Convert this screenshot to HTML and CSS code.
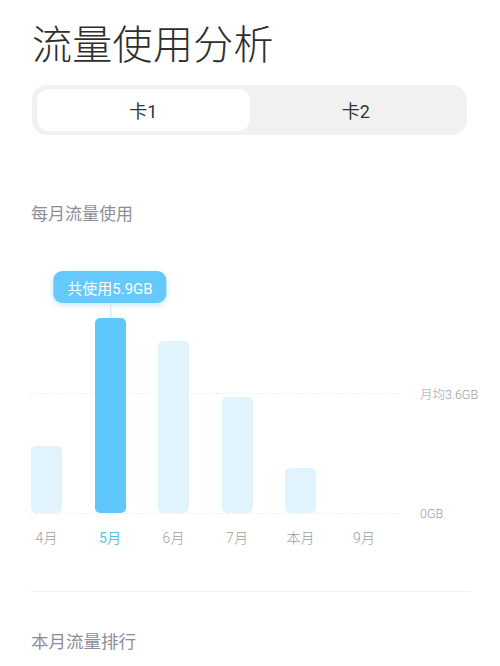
FILE: index.html
```html
<!DOCTYPE html>
<html lang="zh">
<head>
<meta charset="utf-8">
<title>流量使用分析</title>
<link rel="stylesheet" href="styles.css">
</head>
<body>
<div class="page">
  <h1 class="title">流量使用分析</h1>
  <div class="seg">
    <div class="seg-item active">卡1</div>
    <div class="seg-item">卡2</div>
  </div>
  <h2 class="section">每月流量使用</h2>
  <div class="plot">
    <div class="grid" style="bottom:120px"><span class="grid-line"></span><span class="grid-label">月均3.6GB</span></div>
    <div class="grid" style="bottom:0"><span class="grid-line"></span><span class="grid-label">0GB</span></div>
    <div class="bars">
      <div class="col"><div class="bar" style="height:67px"></div></div>
      <div class="col"><div class="tip">共使用5.9GB</div><div class="bar on" style="height:195px"></div></div>
      <div class="col"><div class="bar" style="height:172px"></div></div>
      <div class="col"><div class="bar" style="height:116px"></div></div>
      <div class="col"><div class="bar" style="height:45px"></div></div>
      <div class="col"></div>
    </div>
  </div>
  <div class="months">
    <span class="m">4月</span>
    <span class="m on">5月</span>
    <span class="m">6月</span>
    <span class="m">7月</span>
    <span class="m">本月</span>
    <span class="m">9月</span>
  </div>
  <div class="divider"></div>
  <h2 class="section second">本月流量排行</h2>
</div>
</body>
</html>
```
FILE: styles.css
```css
* { box-sizing: border-box; }
html, body {
  margin: 0;
  padding: 0;
  background: #ffffff;
  font-family: Roboto, "Noto Sans CJK SC", "Noto Sans", sans-serif;
}
.page {
  padding: 0 30px;
  width: 500px;
  height: 666px;
  overflow: hidden;
}
.title {
  margin: 22px 0 0 2px;
  font-size: 40px;
  line-height: 48px;
  font-weight: 300;
  color: #2e2e2e;
  letter-spacing: 0.3px;
}
.seg {
  margin: 15px 3px 0 2px;
  height: 50px;
  padding: 4px 5px;
  background: #f1f1f1;
  border-radius: 15px;
  display: flex;
}
.seg-item {
  flex: 1;
  display: flex;
  align-items: center;
  justify-content: center;
  font-size: 18px;
  color: #333;
  border-radius: 12px;
}
.seg-item.active {
  background: #ffffff;
}
.section {
  margin: 68px 0 0 1px;
  font-size: 17px;
  line-height: 22px;
  font-weight: 400;
  color: #8d8d9a;
}
.section.second {
  margin-top: 39px;
  font-size: 17.5px;
}
.plot {
  position: relative;
  margin-top: 35px;
  height: 253px;
}
.grid {
  position: absolute;
  left: 0;
  display: flex;
  align-items: center;
  height: 0;
}
.grid-line {
  width: 370px;
  border-top: 1px dashed #f0f0f0;
}
.grid-label {
  margin-left: 20px;
  font-size: 12.5px;
  font-weight: 300;
  color: #9c9c9c;
  white-space: nowrap;
}
.bars {
  position: relative;
  height: 100%;
  display: flex;
  align-items: flex-end;
  gap: 32.5px;
  padding-left: 1px;
}
.col {
  position: relative;
  width: 31px;
  display: flex;
  align-items: flex-end;
}
.bar {
  width: 31px;
  background: #e1f3fd;
  border-radius: 5px;
}
.bar.on {
  background: #5fc7fc;
}
.tip {
  position: absolute;
  left: 50%;
  bottom: 210px;
  transform: translateX(-50%);
  height: 32px;
  padding: 0 14px;
  display: flex;
  align-items: center;
  white-space: nowrap;
  font-size: 15px;
  color: #ffffff;
  background: #66c9fb;
  border-radius: 9px;
  box-shadow: 0 2px 6px rgba(90, 180, 235, 0.35);
}
.tip::after {
  content: "";
  position: absolute;
  left: 50%;
  top: 32px;
  width: 1px;
  height: 15px;
  background: #cfdde6;
}
.months {
  margin-top: 16px;
  display: flex;
  gap: 32.5px;
  padding-left: 1px;
}
.m {
  width: 31px;
  display: flex;
  justify-content: center;
  white-space: nowrap;
  font-size: 14px;
  line-height: 18px;
  font-weight: 300;
  color: #9e9e9e;
}
.m.on {
  color: #5bbdf0;
  font-weight: 400;
}
.divider {
  margin-top: 44px;
  height: 1px;
  width: 440px;
  background: #f2f2f2;
}
```
